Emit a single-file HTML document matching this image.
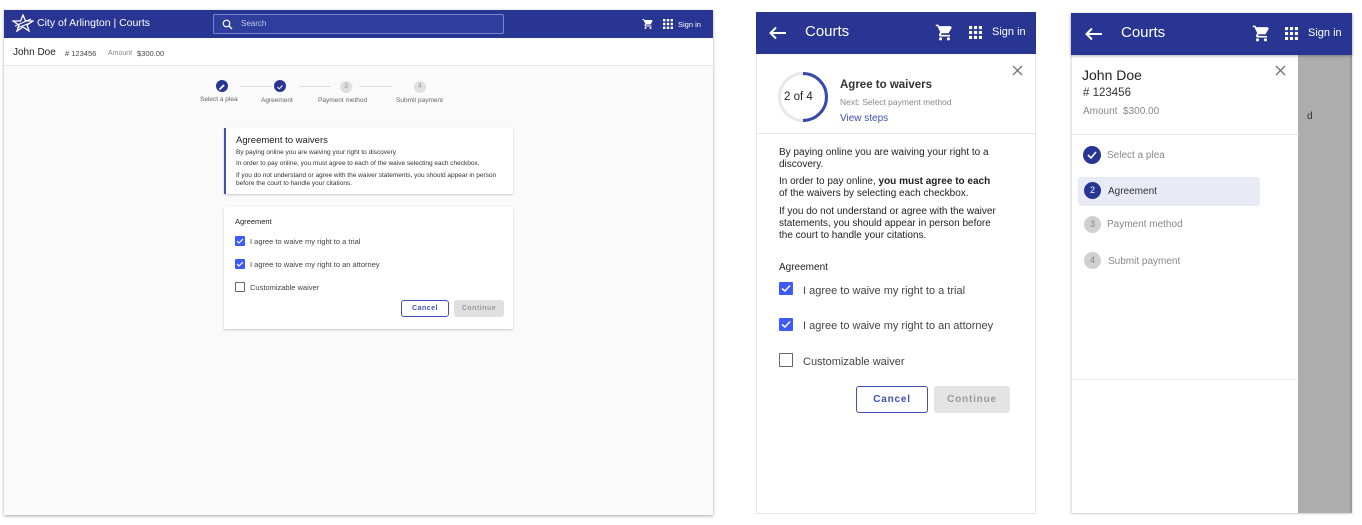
<!DOCTYPE html>
<html><head><meta charset="utf-8"><style>
*{box-sizing:border-box;margin:0;padding:0}
body{width:1362px;height:525px;background:#fff;font-family:"Liberation Sans",sans-serif;position:relative;overflow:hidden;color:#212121}
.a{position:absolute}
.blue{background:#283593;color:#fff}
.cb{position:absolute;width:10px;height:10px;background:#3d5afe;border-radius:1px}
.cb svg{position:absolute;left:0;top:0}
.cbo{position:absolute;width:10px;height:10px;border:1.5px solid #666;border-radius:1px}
</style></head><body>

<!-- Desktop frame -->
<div class="a" style="left:4px;top:10px;width:709px;height:505px;background:#fafafa;box-shadow:0 1px 3px rgba(0,0,0,.35)">
  <div class="a blue" style="left:0;top:0;width:709px;height:28px">
    <svg class="a" style="left:8px;top:4px" width="22" height="18" viewBox="0 0 22 18"><path d="M11 1 L13.5 7 L21 7 L15 11 L17 17 L11 13 L5 17 L7 11 L1 7 L8.5 7 Z" fill="none" stroke="#fff" stroke-width="1.3"/><path d="M3 12 L19 5 M5 14 L18 9" stroke="#fff" stroke-width="1"/></svg>
    <div class="a" style="left:33px;top:7px;font-size:10.5px">City of Arlington | Courts</div>
    <div class="a" style="left:209px;top:4px;width:291px;height:20px;border:1px solid #7986cb;border-radius:2px;background:#2f3d9c">
      <svg class="a" style="left:8px;top:4px" width="11" height="11" viewBox="0 0 11 11"><circle cx="4.5" cy="4.5" r="3.3" fill="none" stroke="#fff" stroke-width="1.2"/><path d="M7 7 L10 10" stroke="#fff" stroke-width="1.3"/></svg>
      <div class="a" style="left:27px;top:4px;font-size:8px;color:#c5cae9">Search</div>
    </div>
    <svg class="a" style="left:638px;top:8px" width="12" height="12" viewBox="0 0 24 24"><path fill="#fff" d="M7 18c-1.1 0-2 .9-2 2s.9 2 2 2 2-.9 2-2-.9-2-2-2zM1 2v2h2l3.6 7.6L5.2 14c-.1.3-.2.6-.2 1 0 1.1.9 2 2 2h12v-2H7.4l1.1-2h7.5c.7 0 1.4-.4 1.7-1l3.6-6.5L19.4 4H5.2l-.9-2H1zm16 16c-1.1 0-2 .9-2 2s.9 2 2 2 2-.9 2-2-.9-2-2-2z"/></svg>
    <svg class="a" style="left:659px;top:9px" width="10" height="10" viewBox="0 0 10 10" fill="#fff"><rect x="0" y="0" width="2.4" height="2.4"/><rect x="3.8" y="0" width="2.4" height="2.4"/><rect x="7.6" y="0" width="2.4" height="2.4"/><rect x="0" y="3.8" width="2.4" height="2.4"/><rect x="3.8" y="3.8" width="2.4" height="2.4"/><rect x="7.6" y="3.8" width="2.4" height="2.4"/><rect x="0" y="7.6" width="2.4" height="2.4"/><rect x="3.8" y="7.6" width="2.4" height="2.4"/><rect x="7.6" y="7.6" width="2.4" height="2.4"/></svg>
    <div class="a" style="left:674px;top:10px;font-size:7.5px">Sign in</div>
  </div>
  <div class="a" style="left:0;top:28px;width:709px;height:28px;background:#fff;border-bottom:1px solid #e8e8e8">
    <div class="a" style="left:9px;top:9px;font-size:10px">John Doe</div>
    <div class="a" style="left:61px;top:11px;font-size:7.5px;color:#444"># 123456</div>
    <div class="a" style="left:104px;top:12px;font-size:7px;color:#888">Amount</div>
    <div class="a" style="left:133px;top:11px;font-size:7.5px;color:#444">$300.00</div>
  </div>
  <!-- stepper -->
  <div class="a" style="left:212px;top:70px;width:12px;height:12px;border-radius:50%;background:#283593"><svg width="12" height="12" viewBox="0 0 12 12"><path d="M3.5 8.5 L8 4" stroke="#fff" stroke-width="1.8"/></svg></div>
  <div class="a" style="left:236px;top:76px;width:32px;height:1px;background:#ddd"></div>
  <div class="a" style="left:270px;top:70px;width:12px;height:12px;border-radius:50%;background:#283593"><svg width="12" height="12" viewBox="0 0 12 12"><path d="M3.5 6 L5.3 7.8 L8.5 4.5" stroke="#fff" stroke-width="1" fill="none"/></svg></div>
  <div class="a" style="left:295px;top:76px;width:32px;height:1px;background:#ddd"></div>
  <div class="a" style="left:336px;top:71px;width:12px;height:12px;border-radius:50%;background:#e0e0e0;font-size:7px;color:#999;text-align:center;line-height:12px">3</div>
  <div class="a" style="left:355px;top:76px;width:33px;height:1px;background:#ddd"></div>
  <div class="a" style="left:410px;top:71px;width:12px;height:12px;border-radius:50%;background:#e0e0e0;font-size:7px;color:#999;text-align:center;line-height:12px">4</div>
  <div class="a" style="left:196px;top:86px;font-size:6.5px;color:#666">Select a plea</div>
  <div class="a" style="left:257px;top:87px;font-size:6.5px;color:#666">Agreement</div>
  <div class="a" style="left:314px;top:87px;font-size:6.5px;color:#666">Payment method</div>
  <div class="a" style="left:392px;top:87px;font-size:6.5px;color:#666">Submit payment</div>
  <!-- card 1 -->
  <div class="a" style="left:220px;top:118px;width:289px;height:66px;background:#fff;border-left:2px solid #3f51b5;box-shadow:0 1px 2px rgba(0,0,0,.2)">
    <div class="a" style="left:10px;top:7px;font-size:9.5px">Agreement to waivers</div>
    <div class="a" style="left:10px;top:21px;font-size:6.5px;color:#333">By paying online you are waiving your right to discovery</div>
    <div class="a" style="left:10px;top:32px;font-size:6.5px;color:#333">In order to pay online, you must agree to each of the waive selecting each checkbox.</div>
    <div class="a" style="left:10px;top:44px;width:275px;font-size:6.5px;line-height:8px;color:#333">If you do not understand or agree with the waiver statements, you should appear in person before the court to handle your citations.</div>
  </div>
  <!-- card 2 -->
  <div class="a" style="left:220px;top:197px;width:289px;height:122px;background:#fff;box-shadow:0 1px 2px rgba(0,0,0,.2)">
    <div class="a" style="left:11px;top:10px;font-size:7.5px;color:#222">Agreement</div>
    <div class="cb" style="left:11px;top:29px"><svg width="10" height="10"><path d="M2 5 L4 7 L8 3" stroke="#fff" stroke-width="1.2" fill="none"/></svg></div>
    <div class="a" style="left:26px;top:30px;font-size:7.5px;color:#444">I agree to waive my right to a trial</div>
    <div class="cb" style="left:11px;top:52px"><svg width="10" height="10"><path d="M2 5 L4 7 L8 3" stroke="#fff" stroke-width="1.2" fill="none"/></svg></div>
    <div class="a" style="left:26px;top:53px;font-size:7.5px;color:#444">I agree to waive my right to an attorney</div>
    <div class="cbo" style="left:11px;top:75px"></div>
    <div class="a" style="left:26px;top:76px;font-size:7.5px;color:#444">Customizable waiver</div>
  </div>
</div>
<div class="a" style="left:401px;top:300px;width:48px;height:17px;border:1px solid #3f51b5;border-radius:3px;background:#fff;font-size:7px;color:#3f51b5;text-align:center;line-height:15px;font-weight:bold;letter-spacing:.5px">Cancel</div>
<div class="a" style="left:454px;top:300px;width:50px;height:17px;background:#e0e0e0;border-radius:3px;font-size:7px;color:#999;text-align:center;line-height:17px;font-weight:bold;letter-spacing:.5px">Continue</div>

<!-- Middle mobile frame -->
<div class="a" style="left:756px;top:12px;width:280px;height:502px;background:#fff;border:1px solid #e6e6e6">
  <div class="a blue" style="left:-1px;top:-1px;width:280px;height:42px">
    <svg class="a" style="left:13px;top:14px" width="18" height="14" viewBox="0 0 18 14"><path d="M17 7 L2 7 M7 1.5 L1.5 7 L7 12.5" stroke="#fff" stroke-width="2" fill="none"/></svg>
    <div class="a" style="left:49px;top:11px;font-size:15px">Courts</div>
    <svg class="a" style="left:179px;top:11px" width="19" height="19" viewBox="0 0 24 24"><path fill="#fff" d="M7 18c-1.1 0-2 .9-2 2s.9 2 2 2 2-.9 2-2-.9-2-2-2zM1 2v2h2l3.6 7.6L5.2 14c-.1.3-.2.6-.2 1 0 1.1.9 2 2 2h12v-2H7.4l1.1-2h7.5c.7 0 1.4-.4 1.7-1l3.6-6.5L19.4 4H5.2l-.9-2H1zm16 16c-1.1 0-2 .9-2 2s.9 2 2 2 2-.9 2-2-.9-2-2-2z"/></svg>
    <svg class="a" style="left:213px;top:14px" width="13" height="13" viewBox="0 0 10 10" fill="#fff"><rect x="0" y="0" width="2.4" height="2.4"/><rect x="3.8" y="0" width="2.4" height="2.4"/><rect x="7.6" y="0" width="2.4" height="2.4"/><rect x="0" y="3.8" width="2.4" height="2.4"/><rect x="3.8" y="3.8" width="2.4" height="2.4"/><rect x="7.6" y="3.8" width="2.4" height="2.4"/><rect x="0" y="7.6" width="2.4" height="2.4"/><rect x="3.8" y="7.6" width="2.4" height="2.4"/><rect x="7.6" y="7.6" width="2.4" height="2.4"/></svg>
    <div class="a" style="left:236px;top:14px;font-size:11px">Sign in</div>
  </div>
  <svg class="a" style="left:255px;top:52px" width="11" height="11" viewBox="0 0 11 11"><path d="M1 1 L10 10 M10 1 L1 10" stroke="#777" stroke-width="1.4"/></svg>
  <svg class="a" style="left:20px;top:58px" width="52" height="52" viewBox="0 0 52 52"><circle cx="26" cy="26" r="23.5" fill="none" stroke="#e8e8e8" stroke-width="3"/><path d="M26 2.5 A23.5 23.5 0 0 1 26 49.5" fill="none" stroke="#3949ab" stroke-width="3"/></svg>
  <div class="a" style="left:27px;top:78px;font-size:11.5px;color:#222">2 of 4</div>
  <div class="a" style="left:83px;top:66px;font-size:11.5px;font-weight:bold;color:#333">Agree to waivers</div>
  <div class="a" style="left:83px;top:84px;font-size:8.5px;color:#888">Next: Select payment method</div>
  <div class="a" style="left:83px;top:100px;font-size:10px;color:#3f51b5">View steps</div>
  <div class="a" style="left:0;top:120px;width:278px;height:1px;background:#e6e6e6"></div>
  <div class="a" style="left:22px;top:134px;width:222px;font-size:10px;line-height:12px;color:#222">By paying online you are waiving your right to a discovery.</div>
  <div class="a" style="left:22px;top:163px;width:222px;font-size:10px;line-height:12px;color:#222">In order to pay online, <b>you must agree to each</b> of the waivers by selecting each checkbox.</div>
  <div class="a" style="left:22px;top:193px;width:222px;font-size:10px;line-height:12px;color:#222">If you do not understand or agree with the waiver statements, you should appear in person before the court to handle your citations.</div>
  <div class="a" style="left:22px;top:249px;font-size:10px;color:#222">Agreement</div>
  <div class="cb" style="left:22px;top:269px;width:14px;height:13px"><svg width="14" height="13"><path d="M3 6.5 L6 9 L11 3.5" stroke="#fff" stroke-width="1.5" fill="none"/></svg></div>
  <div class="a" style="left:46px;top:272px;font-size:11px;color:#444">I agree to waive my right to a trial</div>
  <div class="cb" style="left:22px;top:305px;width:14px;height:13px"><svg width="14" height="13"><path d="M3 6.5 L6 9 L11 3.5" stroke="#fff" stroke-width="1.5" fill="none"/></svg></div>
  <div class="a" style="left:46px;top:307px;font-size:11px;color:#444">I agree to waive my right to an attorney</div>
  <div class="cbo" style="left:22px;top:340px;width:14px;height:14px;border-width:1.8px"></div>
  <div class="a" style="left:46px;top:343px;font-size:11px;color:#444">Customizable waiver</div>
  <div class="a" style="left:99px;top:373px;width:72px;height:27px;border:1px solid #3f51b5;border-radius:3px;font-size:10px;color:#3f51b5;text-align:center;line-height:25px;font-weight:bold;letter-spacing:.8px">Cancel</div>
  <div class="a" style="left:177px;top:373px;width:76px;height:27px;background:#e4e4e4;border-radius:3px;font-size:10px;color:#999;text-align:center;line-height:27px;font-weight:bold;letter-spacing:.8px">Continue</div>
</div>

<!-- Right mobile frame -->
<div class="a" style="left:1071px;top:13px;width:281px;height:500px;background:#adadad;border-right:2px solid #999;box-shadow:0 1px 2px rgba(0,0,0,.2)">
  <div class="a" style="left:0;top:42px;width:227px;height:458px;background:#fff;border-left:1px solid #e6e6e6">
    <div class="a" style="left:10px;top:12px;font-size:14px;color:#222">John Doe</div>
    <div class="a" style="left:11px;top:32px;font-size:11.5px;color:#333"># 123456</div>
    <div class="a" style="left:11px;top:51px;font-size:10px;color:#888">Amount &nbsp;$300.00</div>
    <svg class="a" style="left:203px;top:10px" width="11" height="11" viewBox="0 0 11 11"><path d="M1 1 L10 10 M10 1 L1 10" stroke="#777" stroke-width="1.4"/></svg>
    <div class="a" style="left:0;top:79px;width:227px;height:1px;background:#e6e6e6"></div>
    <div class="a" style="left:11px;top:91px;width:18px;height:18px;border-radius:50%;background:#283593"><svg width="18" height="18"><path d="M5 9 L8 12 L13 6" stroke="#fff" stroke-width="1.6" fill="none"/></svg></div>
    <div class="a" style="left:35px;top:95px;font-size:10px;color:#888">Select a plea</div>
    <div class="a" style="left:6px;top:122px;width:182px;height:29px;background:#e8eaf6;border-radius:3px"></div>
    <div class="a" style="left:12px;top:127px;width:17px;height:17px;border-radius:50%;background:#283593;color:#fff;font-size:9px;text-align:center;line-height:17px">2</div>
    <div class="a" style="left:36px;top:131px;font-size:10px;color:#333">Agreement</div>
    <div class="a" style="left:12px;top:161px;width:17px;height:17px;border-radius:50%;background:#d0d0d0;color:#888;font-size:9px;text-align:center;line-height:17px">3</div>
    <div class="a" style="left:35px;top:164px;font-size:10px;color:#888">Payment method</div>
    <div class="a" style="left:12px;top:197px;width:17px;height:17px;border-radius:50%;background:#d0d0d0;color:#888;font-size:9px;text-align:center;line-height:17px">4</div>
    <div class="a" style="left:36px;top:201px;font-size:10px;color:#888">Submit payment</div>
    <div class="a" style="left:0;top:324px;width:225px;height:1px;background:#ececec"></div>
  </div>
  <div class="a" style="left:236px;top:98px;font-size:10px;color:#333">d</div>
  <div class="a blue" style="left:0;top:0;width:281px;height:42px;box-shadow:0 1px 3px rgba(0,0,0,.3)">
    <svg class="a" style="left:14px;top:14px" width="18" height="14" viewBox="0 0 18 14"><path d="M17 7 L2 7 M7 1.5 L1.5 7 L7 12.5" stroke="#fff" stroke-width="2" fill="none"/></svg>
    <div class="a" style="left:50px;top:11px;font-size:15px">Courts</div>
    <svg class="a" style="left:181px;top:11px" width="19" height="19" viewBox="0 0 24 24"><path fill="#fff" d="M7 18c-1.1 0-2 .9-2 2s.9 2 2 2 2-.9 2-2-.9-2-2-2zM1 2v2h2l3.6 7.6L5.2 14c-.1.3-.2.6-.2 1 0 1.1.9 2 2 2h12v-2H7.4l1.1-2h7.5c.7 0 1.4-.4 1.7-1l3.6-6.5L19.4 4H5.2l-.9-2H1zm16 16c-1.1 0-2 .9-2 2s.9 2 2 2 2-.9 2-2-.9-2-2-2z"/></svg>
    <svg class="a" style="left:214px;top:14px" width="13" height="13" viewBox="0 0 10 10" fill="#fff"><rect x="0" y="0" width="2.4" height="2.4"/><rect x="3.8" y="0" width="2.4" height="2.4"/><rect x="7.6" y="0" width="2.4" height="2.4"/><rect x="0" y="3.8" width="2.4" height="2.4"/><rect x="3.8" y="3.8" width="2.4" height="2.4"/><rect x="7.6" y="3.8" width="2.4" height="2.4"/><rect x="0" y="7.6" width="2.4" height="2.4"/><rect x="3.8" y="7.6" width="2.4" height="2.4"/><rect x="7.6" y="7.6" width="2.4" height="2.4"/></svg>
    <div class="a" style="left:237px;top:14px;font-size:11px">Sign in</div>
  </div>
</div>
</body></html>
